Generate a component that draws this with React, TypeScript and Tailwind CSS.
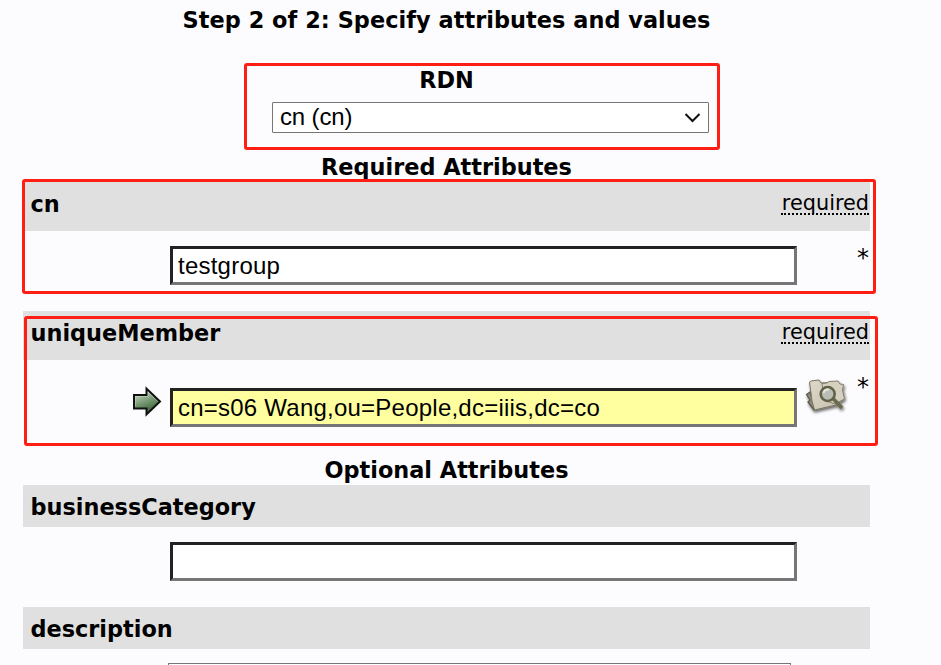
import type { ReactNode } from 'react';

const INPUT =
  'block h-[39px] w-[627px] border-[3px] border-t-[#222] border-l-[#222] border-r-[#767676] border-b-[#767676] pl-[5px] pr-1 font-["Liberation_Sans",Arial,sans-serif] text-[24px] tracking-[0.23px] text-black outline-none';

function Heading({ className, children }: { className: string; children: ReactNode }) {
  return <h2 className={`flex justify-center whitespace-nowrap font-bold leading-[26px] ${className}`}>{children}</h2>;
}

function Bar({ name, className, required }: { name: string; className: string; required?: boolean }) {
  return (
    <div className={`flex items-start justify-between bg-[#e0e0e0] pl-[7.5px] pr-px leading-[26px] ${className}`}>
      <span className="font-bold">{name}</span>
      {required && (
        <span className="mt-[-1px] h-[25px] border-b-2 border-dotted border-black pl-px text-[20.8px] leading-[26px]">required</span>
      )}
    </div>
  );
}

function ArrowIcon() {
  return (
    <svg width="32" height="32" viewBox="0 0 32 32" className="block">
      <defs>
        <linearGradient id="arrow" x1="0.2" y1="0" x2="0.6" y2="1">
          <stop offset="0.2" stopColor="#b4c8b0" />
          <stop offset="0.5" stopColor="#7b9c76" />
          <stop offset="0.85" stopColor="#42693e" />
        </linearGradient>
      </defs>
      <path d="M3 9H15.5V2.5L29 15.5L15.5 28.5V22.5H3Z" fill="url(#arrow)" stroke="#111" strokeWidth="2" />
      <path d="M4.5 20.5V10.5H17V6L26.5 15.5" fill="none" stroke="#dce6da" strokeOpacity="0.35" />
    </svg>
  );
}

function BrowseIcon() {
  return (
    <svg width="44" height="40" viewBox="0 0 44 40" className="block">
      <defs>
        <filter id="soft" x="-20%" y="-20%" width="150%" height="150%">
          <feDropShadow dx="1" dy="2" stdDeviation="1.4" floodColor="#000" floodOpacity="0.6" />
        </filter>
        <linearGradient id="paper" x1="0" y1="0" x2="1" y2="1">
          <stop offset="0" stopColor="#ddd8ca" />
          <stop offset="1" stopColor="#c8c1ae" />
        </linearGradient>
      </defs>
      <g filter="url(#soft)" strokeLinejoin="round">
        <path d="M1.5 16.5L5 14L11 30.5L9 32L3 24L5 22Z" fill="#8f8b79" stroke="#5c5a4c" strokeWidth="1.3" />
        <path d="M4.5 4L6 3L14 2L16 5L31 4.5L35 26L9.5 32L7 23Z" fill="url(#paper)" stroke="#77725f" />
        <path d="M17 5.5L22 5L24 3.5L33 3L35 6L38.5 6.5L37.5 12L39.5 21L30 26L19 22Z" fill="#d6d0c0" stroke="#827c6a" />
        <path d="M28 20.5L37 30" stroke="#6b6b4e" strokeWidth="3.8" />
        <circle cx="22.7" cy="16" r="7" fill="#babdb3" stroke="#626249" strokeWidth="2.6" />
        <path d="M18.5 15Q19.5 11 24 11.5" fill="none" stroke="#e6e7df" strokeWidth="2" />
      </g>
    </svg>
  );
}

export default function App() {
  return (
    <main className="relative h-[665px] w-[941px] overflow-hidden bg-[#fcfcfe] font-['DejaVu_Sans',Verdana,sans-serif] text-[22.4px] text-black">
      <div className="ml-[23px] flex w-[847px] flex-col">
        <Heading className="mt-[7px] h-[60px] tracking-[0.05px]">Step 2 of 2: Specify attributes and values</Heading>
        <Heading className="h-[35px]">RDN</Heading>
        <div className="ml-[249px] flex h-[31px] w-[437px] items-center justify-between rounded-[1px] border border-[#767676] bg-white pl-[7px] pr-[7px] font-['Liberation_Sans',Arial,sans-serif] text-[24px]">
          <span className="mt-[-2px] leading-[29px] tracking-[-0.15px]">cn (cn)</span>
          <svg width="17" height="12" viewBox="0 0 17 12" fill="none" stroke="#111" strokeWidth="2">
            <path d="M1.5 2L8.5 9L15.5 2" />
          </svg>
        </div>
        <Heading className="mt-[21px] h-[28px]">Required Attributes</Heading>

        <Bar name="cn" className="h-[49px] pt-[9px]" required />
        <div className="flex h-[80px] items-start pt-[15px]">
          <input className={`${INPUT} ml-[147px] bg-white`} defaultValue="testgroup" />
          <span className="ml-auto pr-px text-[24px] leading-[24px]">*</span>
        </div>

        <Bar name="uniqueMember" className="h-[49px] pt-[9px]" required />
        <div className="flex h-[97px] items-start pt-[15px]">
          <div className="ml-[108px] mt-[11px] w-[39px]"><ArrowIcon /></div>
          <input className={`${INPUT} mt-[13px] bg-[#ffffa0]`} defaultValue="cn=s06 Wang,ou=People,dc=iiis,dc=co" />
          <div className="ml-[8px] mt-[3px] w-[44px]"><BrowseIcon /></div>
          <span className="ml-auto pr-px text-[24px] leading-[24px]">*</span>
        </div>

        <Heading className="h-[28px]">Optional Attributes</Heading>
        <Bar name="businessCategory" className="h-[42px] pt-[9px]" />
        <div className="h-[80px] pt-[15px]">
          <input className={`${INPUT} ml-[147px] bg-white`} defaultValue="" />
        </div>
        <Bar name="description" className="h-[42px] pt-[9px]" />
        <textarea className="ml-[145px] mt-[14px] block h-[60px] w-[623px] resize-none border border-[#767676] bg-white" />
      </div>

      <div className="pointer-events-none absolute left-[244px] top-[63px] h-[87px] w-[476px] rounded-[3px] border-[3px] border-[#ff1e14]" />
      <div className="pointer-events-none absolute left-[22px] top-[179px] h-[115px] w-[854px] rounded-[3px] border-[3px] border-[#ff1e14]" />
      <div className="pointer-events-none absolute left-[24px] top-[316px] h-[130px] w-[854px] rounded-[3px] border-[3px] border-[#ff1e14]" />
    </main>
  );
}
